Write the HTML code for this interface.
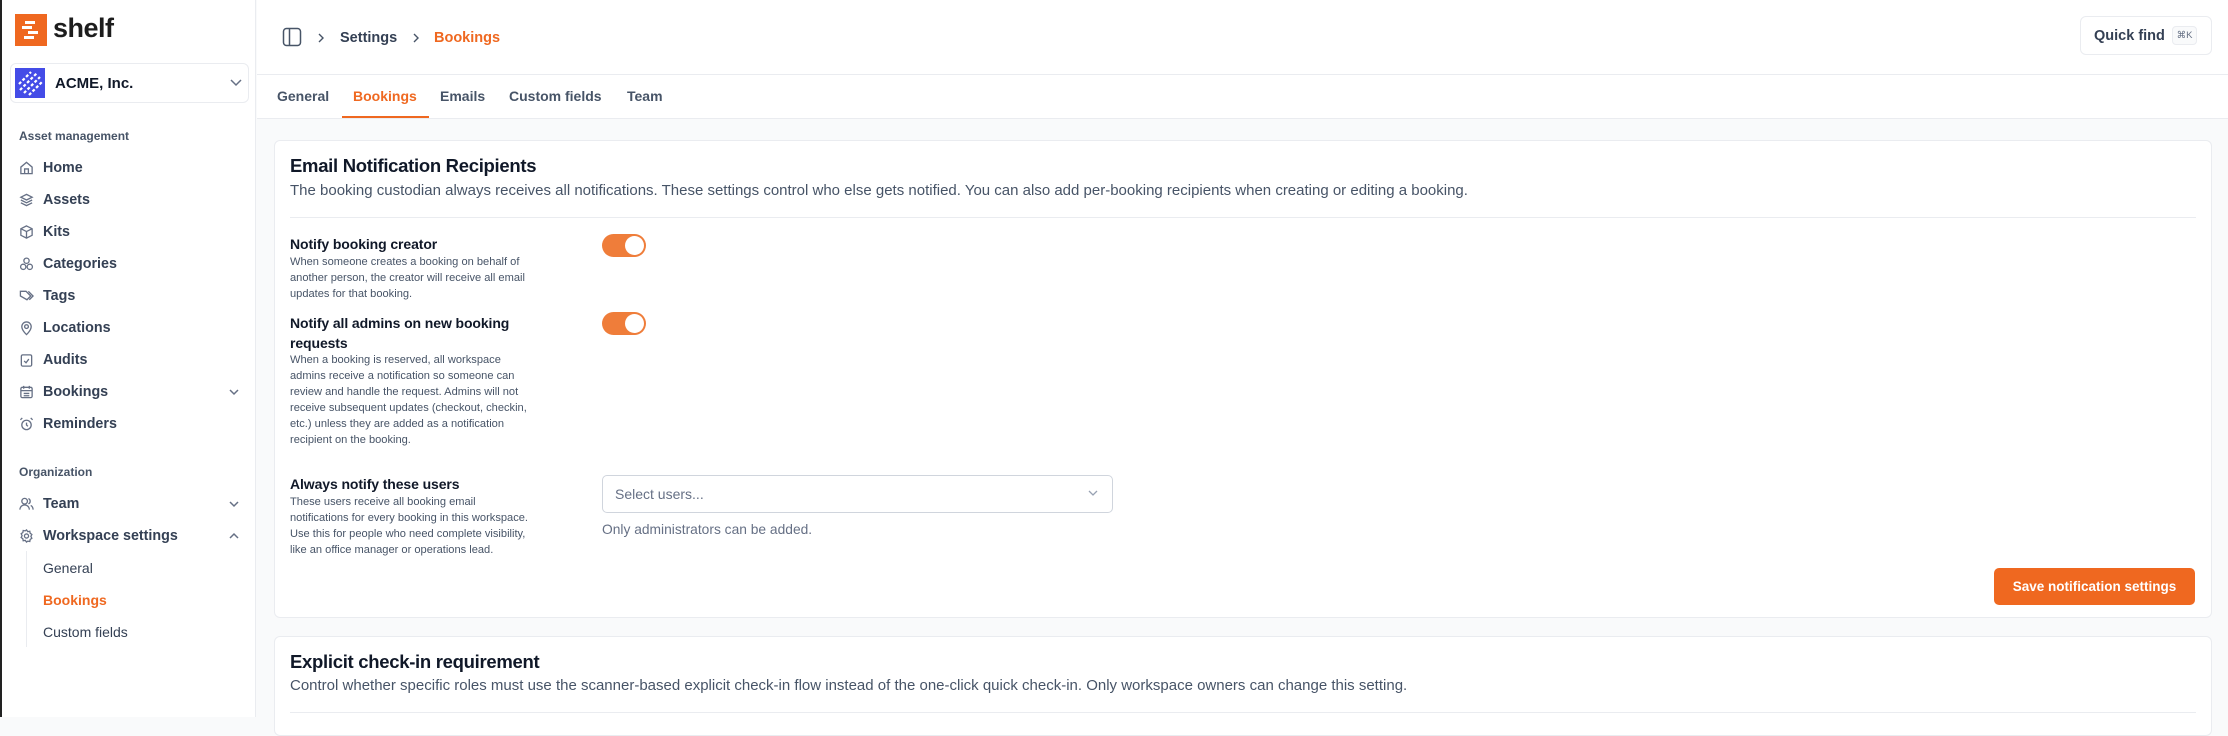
<!DOCTYPE html>
<html><head><meta charset="utf-8"><style>
*{box-sizing:border-box;margin:0;padding:0}
body{width:2228px;height:717px;overflow:hidden;font-family:"Liberation Sans",sans-serif;background:#f9fafb;position:relative;color:#101828}
.a{position:absolute;white-space:nowrap}
#sb{position:absolute;left:0;top:0;width:256px;height:717px;background:#fff;border-right:1px solid #eaecf0;border-left:2px solid #222}
.nav{position:absolute;left:41px;font-size:14.3px;font-weight:bold;color:#344054;transform:translateY(-50%)}
.ic{position:absolute;left:17px;width:15px;height:15px;transform:translateY(-50%)}
.sec{position:absolute;left:17px;font-size:12px;font-weight:bold;color:#475467;transform:translateY(-50%)}
.chev{position:absolute;left:226px;width:12px;height:12px;transform:translateY(-50%)}
.lbl{font-size:14px;color:#101828;font-weight:bold;letter-spacing:-0.1px}
.sub{font-size:11.1px;color:#475467;line-height:16px}
.tog{position:absolute;left:602px;width:44px;height:23px;border-radius:12px;background:#ef7d3a}
.tog::after{content:"";position:absolute;right:2px;top:2px;width:19px;height:19px;border-radius:50%;background:#fff}
</style></head><body>
<div id="sb">
  <div class="a" style="left:13px;top:14px;width:32px;height:32px;background:#ef6820">
    <div style="position:absolute;left:10px;top:7px;width:10px;height:2.5px;background:#fff"></div>
    <div style="position:absolute;left:7px;top:12px;width:10px;height:2.5px;background:#fff"></div>
    <div style="position:absolute;left:13px;top:17px;width:10px;height:2.5px;background:#fff"></div>
    <div style="position:absolute;left:9px;top:22px;width:10px;height:2.5px;background:#fff"></div>
  </div>
  <div class="a" style="left:51px;top:13px;font-size:27px;font-weight:bold;color:#1d1d1d;letter-spacing:-0.5px">shelf</div>
  <div class="a" style="left:8px;top:63px;width:239px;height:40px;border:1px solid #eaecf0;border-radius:6px"></div>
  <div class="a" style="left:13px;top:68px;width:30px;height:30px;background:#444ce7;overflow:hidden">
    <svg width="30" height="30"><g stroke="#fff" stroke-width="2.2" stroke-dasharray="3 2"><line x1="4" y1="16" x2="16" y2="4"/><line x1="5" y1="22" x2="22" y2="5"/><line x1="9" y1="25" x2="25" y2="9"/><line x1="14" y1="27" x2="27" y2="14"/></g></svg>
  </div>
  <div class="a" style="left:53px;top:75px;font-size:15px;font-weight:bold;color:#101828">ACME, Inc.</div>
  <svg class="a" style="left:228px;top:79px" width="12" height="8"><path d="M1 1l5 5 5-5" fill="none" stroke="#667085" stroke-width="1.5"/></svg>
  <div class="sec" style="top:136px">Asset management</div>
  <svg class="ic" style="top:168px" viewBox="0 0 16 16" fill="none" stroke="#667085" stroke-width="1.4"><path d="M2 7l6-5 6 5v7H2z M6 14V9h4v5"/></svg>
  <div class="nav" style="top:168px">Home</div>
  <svg class="ic" style="top:200px" viewBox="0 0 16 16" fill="none" stroke="#667085" stroke-width="1.4"><path d="M8 2l6 3-6 3-6-3z M2 8l6 3 6-3 M2 11l6 3 6-3"/></svg>
  <div class="nav" style="top:200px">Assets</div>
  <svg class="ic" style="top:232px" viewBox="0 0 16 16" fill="none" stroke="#667085" stroke-width="1.4"><path d="M8 1.5l6 3v7l-6 3-6-3v-7z M2 4.5l6 3 6-3 M8 7.5v7"/></svg>
  <div class="nav" style="top:232px">Kits</div>
  <svg class="ic" style="top:264px" viewBox="0 0 16 16" fill="none" stroke="#667085" stroke-width="1.4"><circle cx="8" cy="4.5" r="2.8"/><circle cx="4.5" cy="11" r="2.8"/><circle cx="11.5" cy="11" r="2.8"/></svg>
  <div class="nav" style="top:264px">Categories</div>
  <svg class="ic" style="top:296px" viewBox="0 0 16 16" fill="none" stroke="#667085" stroke-width="1.4"><path d="M1.5 3h6l5 5-4 4-7-4z M10 3l5 5-4 4"/></svg>
  <div class="nav" style="top:296px">Tags</div>
  <svg class="ic" style="top:328px" viewBox="0 0 16 16" fill="none" stroke="#667085" stroke-width="1.4"><path d="M8 15s5-4.5 5-8.5a5 5 0 0 0-10 0C3 10.5 8 15 8 15z"/><circle cx="8" cy="6.5" r="2"/></svg>
  <div class="nav" style="top:328px">Locations</div>
  <svg class="ic" style="top:360px" viewBox="0 0 16 16" fill="none" stroke="#667085" stroke-width="1.4"><rect x="2.5" y="2.5" width="11" height="12" rx="1.5"/><path d="M5.5 9l2 2 3-4"/></svg>
  <div class="nav" style="top:360px">Audits</div>
  <svg class="ic" style="top:392px" viewBox="0 0 16 16" fill="none" stroke="#667085" stroke-width="1.4"><rect x="2" y="3" width="12" height="11" rx="1.5"/><path d="M2 6.5h12 M5 1.5v3 M11 1.5v3 M5 9.5h6 M5 12h6"/></svg>
  <div class="nav" style="top:392px">Bookings</div>
  <svg class="chev" style="top:392px" viewBox="0 0 12 12"><path d="M2 4l4 4 4-4" fill="none" stroke="#667085" stroke-width="1.5"/></svg>
  <svg class="ic" style="top:424px" viewBox="0 0 16 16" fill="none" stroke="#667085" stroke-width="1.4"><circle cx="8" cy="9" r="5"/><path d="M8 6.5V9l1.5 1.5 M1.5 3.5l2-2 M14.5 3.5l-2-2"/></svg>
  <div class="nav" style="top:424px">Reminders</div>
  <div class="sec" style="top:472px">Organization</div>
  <svg class="ic" style="top:504px" viewBox="0 0 16 16" fill="none" stroke="#667085" stroke-width="1.4"><circle cx="6" cy="5" r="3"/><path d="M1 14c0-3 2.2-5 5-5s5 2 5 5 M10 2.2a3 3 0 0 1 0 5.6 M12.5 9.5c1.5.8 2.5 2.4 2.5 4.5"/></svg>
  <div class="nav" style="top:504px">Team</div>
  <svg class="chev" style="top:504px" viewBox="0 0 12 12"><path d="M2 4l4 4 4-4" fill="none" stroke="#667085" stroke-width="1.5"/></svg>
  <svg class="ic" style="top:536px" viewBox="0 0 16 16" fill="none" stroke="#667085" stroke-width="1.4"><circle cx="8" cy="8" r="2.2"/><path d="M8 1.5l1.3 1.8 2.2-.4.4 2.2 1.8 1.3-1 2 1 2-1.8 1.3-.4 2.2-2.2-.4L8 14.5l-1.3-1.8-2.2.4-.4-2.2-1.8-1.3 1-2-1-2 1.8-1.3.4-2.2 2.2.4z"/></svg>
  <div class="nav" style="top:536px">Workspace settings</div>
  <svg class="chev" style="top:536px" viewBox="0 0 12 12"><path d="M2 8l4-4 4 4" fill="none" stroke="#667085" stroke-width="1.5"/></svg>
  <div class="a" style="left:24px;top:551px;width:1px;height:96px;background:#eaecf0"></div>
  <div class="nav" style="top:568px;left:41px;font-weight:normal;color:#344054;font-size:14px">General</div>
  <div class="nav" style="top:600px;left:41px;color:#ef6820;font-size:14px">Bookings</div>
  <div class="nav" style="top:632px;left:41px;font-weight:normal;color:#344054;font-size:14px">Custom fields</div>
</div>
<!-- header -->
<div class="a" style="left:257px;top:0;width:1971px;height:119px;background:#fff;border-bottom:1px solid #eaecf0"></div>
<div class="a" style="left:257px;top:74px;width:1971px;height:1px;background:#eaecf0"></div>
<svg class="a" style="left:282px;top:27px" width="20" height="20" viewBox="0 0 20 20" fill="none" stroke="#475467" stroke-width="1.5"><rect x="1.5" y="1.5" width="17" height="17" rx="3"/><path d="M7.5 1.5v17"/></svg>
<svg class="a" style="left:317px;top:33px" width="8" height="10"><path d="M2 1l4 4-4 4" fill="none" stroke="#475467" stroke-width="1.4"/></svg>
<div class="a" style="left:340px;top:30px;font-size:14.5px;font-weight:bold;color:#344054">Settings</div>
<svg class="a" style="left:412px;top:33px" width="8" height="10"><path d="M2 1l4 4-4 4" fill="none" stroke="#475467" stroke-width="1.4"/></svg>
<div class="a" style="left:434px;top:30px;font-size:14.5px;font-weight:bold;color:#ef6820">Bookings</div>
<div class="a" style="left:2080px;top:16px;width:132px;height:39px;border:1px solid #eaecf0;border-radius:6px;background:#fff"></div>
<div class="a" style="left:2094px;top:28px;font-size:14.5px;font-weight:bold;color:#344054">Quick find</div>
<div class="a" style="left:2172px;top:26px;width:25px;height:19px;border:1px solid #eaecf0;border-radius:4px;background:#f9fafb;font-size:9.5px;color:#667085;text-align:center;line-height:17px">⌘K</div>
<!-- tabs -->
<div class="a" style="left:277px;top:88px;font-size:14px;font-weight:bold;color:#475467">General</div>
<div class="a" style="left:353px;top:88px;font-size:14px;font-weight:bold;color:#ef6820">Bookings</div>
<div class="a" style="left:342px;top:116px;width:87px;height:2px;background:#ef6820"></div>
<div class="a" style="left:440px;top:88px;font-size:14px;font-weight:bold;color:#475467">Emails</div>
<div class="a" style="left:509px;top:88px;font-size:14px;font-weight:bold;color:#475467">Custom fields</div>
<div class="a" style="left:627px;top:88px;font-size:14px;font-weight:bold;color:#475467">Team</div>
<!-- card 1 -->
<div class="a" style="left:274px;top:140px;width:1938px;height:478px;background:#fff;border:1px solid #eaecf0;border-radius:6px"></div>
<div class="a" style="left:290px;top:155px;font-size:18.5px;font-weight:bold;letter-spacing:-0.3px">Email Notification Recipients</div>
<div class="a" style="left:290px;top:182px;font-size:15px;color:#475467">The booking custodian always receives all notifications. These settings control who else gets notified. You can also add per-booking recipients when creating or editing a booking.</div>
<div class="a" style="left:290px;top:217px;width:1906px;height:1px;background:#eaecf0"></div>
<div class="a lbl" style="left:290px;top:236px">Notify booking creator</div>
<div class="a sub" style="left:290px;top:254px">When someone creates a booking on behalf of<br>another person, the creator will receive all email<br>updates for that booking.</div>
<div class="tog" style="top:234px"></div>
<div class="a lbl" style="left:290px;top:313px;line-height:20px">Notify all admins on new booking<br>requests</div>
<div class="a sub" style="left:290px;top:352px">When a booking is reserved, all workspace<br>admins receive a notification so someone can<br>review and handle the request. Admins will not<br>receive subsequent updates (checkout, checkin,<br>etc.) unless they are added as a notification<br>recipient on the booking.</div>
<div class="tog" style="top:312px"></div>
<div class="a lbl" style="left:290px;top:476px">Always notify these users</div>
<div class="a sub" style="left:290px;top:494px">These users receive all booking email<br>notifications for every booking in this workspace.<br>Use this for people who need complete visibility,<br>like an office manager or operations lead.</div>
<div class="a" style="left:602px;top:475px;width:511px;height:38px;border:1px solid #d0d5dd;border-radius:5px;background:#fff"></div>
<div class="a" style="left:615px;top:486px;font-size:14px;color:#667085">Select users...</div>
<svg class="a" style="left:1088px;top:490px" width="10" height="7"><path d="M1 1l4 4 4-4" fill="none" stroke="#98a2b3" stroke-width="1.3"/></svg>
<div class="a" style="left:602px;top:522px;font-size:13.8px;color:#667085">Only administrators can be added.</div>
<div class="a" style="left:1994px;top:568px;width:201px;height:37px;background:#ef6820;border-radius:5px;color:#fff;font-size:13.5px;font-weight:bold;text-align:center;line-height:37px">Save notification settings</div>
<!-- card 2 -->
<div class="a" style="left:274px;top:636px;width:1938px;height:100px;background:#fff;border:1px solid #eaecf0;border-radius:6px"></div>
<div class="a" style="left:290px;top:651px;font-size:18.5px;font-weight:bold;letter-spacing:-0.3px">Explicit check-in requirement</div>
<div class="a" style="left:290px;top:677px;font-size:15px;color:#475467">Control whether specific roles must use the scanner-based explicit check-in flow instead of the one-click quick check-in. Only workspace owners can change this setting.</div>
<div class="a" style="left:290px;top:712px;width:1906px;height:1px;background:#eaecf0"></div>
</body></html>
